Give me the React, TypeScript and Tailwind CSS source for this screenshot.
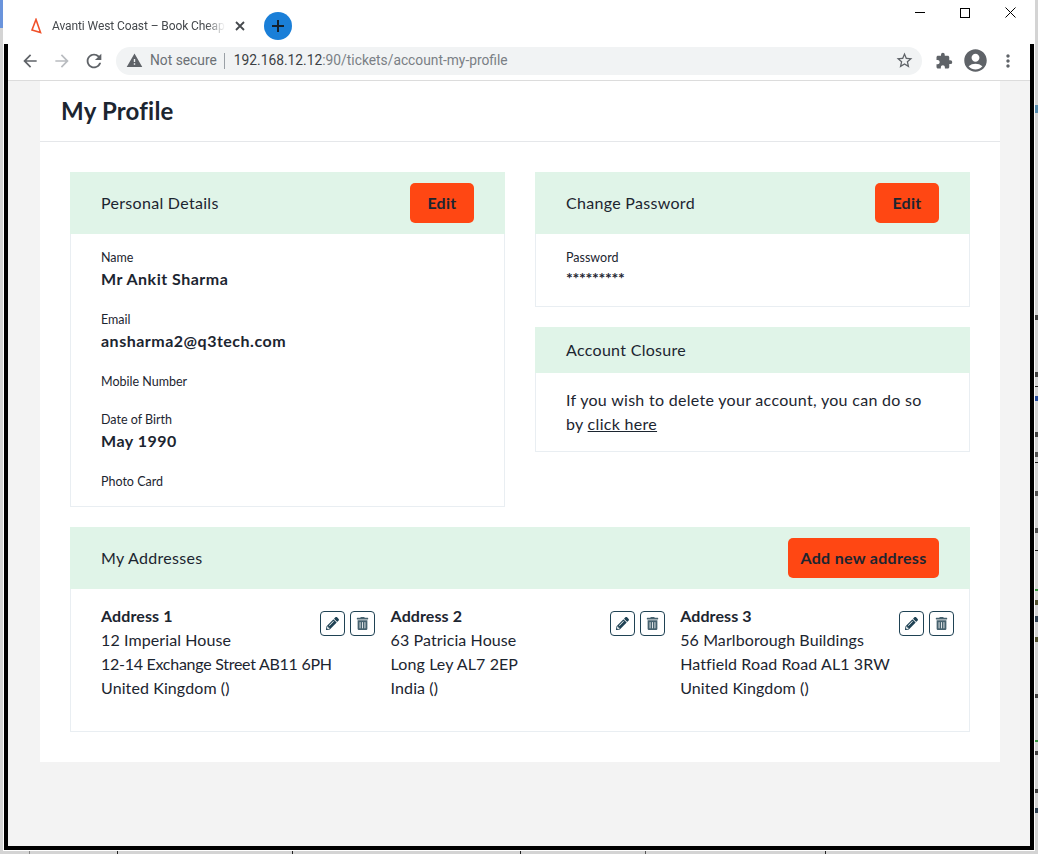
import type { ReactNode } from "react";
import { FaPencilAlt, FaTrashAlt } from "react-icons/fa";
import {
  MdAccountCircle,
  MdArrowBack,
  MdArrowForward,
  MdExtension,
  MdMoreVert,
  MdRefresh,
  MdStarBorder,
  MdWarning,
} from "react-icons/md";

const edgeMarks = [
  { gap: 105, h: 8, color: "bg-[#5b8fb0]" },
  { gap: 202, h: 5, color: "bg-[#444]" },
  { gap: 52, h: 5, color: "bg-[#444]" },
  { gap: 9, h: 1, color: "bg-[#222]" },
  { gap: 9, h: 5, color: "bg-[#2a4fa0]" },
  { gap: 31, h: 5, color: "bg-[#444]" },
  { gap: 15, h: 5, color: "bg-[#555]" },
  { gap: 5, h: 1, color: "bg-[#222]" },
  { gap: 28, h: 5, color: "bg-[#555]" },
  { gap: 32, h: 5, color: "bg-[#555]" },
  { gap: 17, h: 1, color: "bg-[#222]" },
  { gap: 38, h: 2, color: "bg-[#3c9a45]" },
  { gap: 9, h: 5, color: "bg-[#553]" },
  { gap: 11, h: 6, color: "bg-[#345]" },
  { gap: 15, h: 5, color: "bg-[#553]" },
  { gap: 52, h: 4, color: "bg-[#444]" },
  { gap: 42, h: 2, color: "bg-[#3c9a45]" },
  { gap: 9, h: 4, color: "bg-[#444]" },
  { gap: 34, h: 4, color: "bg-[#444]" },
  { gap: 15, h: 5, color: "bg-[#345]" },
];

function Card({ title, action, actionWidth, children }: { title: string; action?: string; actionWidth?: string; children: ReactNode }) {
  return (
    <div className="border border-[#e9eef2] bg-white">
      <div className={`-mx-px -mt-px flex items-center justify-between bg-[#e0f4e8] pr-[31px] pl-[31px] ${action ? "h-[62px]" : "h-[46px]"}`}>
        <h2 className="text-[16px] tracking-[0.3px] text-[#1c2530]">{title}</h2>
        {action && (
          <button className={`h-10 rounded-[5px] bg-[#ff4713] text-[16px] font-bold tracking-[0.3px] text-[#1c2530] ${actionWidth}`}>{action}</button>
        )}
      </div>
      {children}
    </div>
  );
}

function Field({ label, value }: { label: string; value?: string }) {
  return (
    <div>
      <div className="text-[12.5px] leading-[18px] text-[#1c2530]">{label}</div>
      {value && <div className="text-[16px] leading-[24px] font-bold tracking-[0.5px] text-[#1c2530]">{value}</div>}
    </div>
  );
}

function Address({ title, lines }: { title: string; lines: ReactNode[] }) {
  return (
    <div className="relative w-[274px]">
      <div className="text-[16px] leading-[24px] tracking-[0.1px] text-[#1c2530]">
        <div className="font-bold">{title}</div>
        {lines.map((line, i) => (
          <div key={i}>{line}</div>
        ))}
      </div>
      <div className="absolute top-[7px] right-0 flex gap-[5px]">
        <button className="flex h-[25px] w-[25px] items-center justify-center rounded-[4px] border border-[#1f4254] text-[#1f4254]">
          <FaPencilAlt size={13} />
        </button>
        <button className="flex h-[25px] w-[25px] items-center justify-center rounded-[4px] border border-[#1f4254] text-[#47626f]">
          <FaTrashAlt size={13} />
        </button>
      </div>
    </div>
  );
}

export default function App() {
  return (
    <div className="flex h-[854px] w-[1038px] overflow-hidden bg-[#d4d4d4] font-['Lato',sans-serif]">
      <div className="w-[3px] shrink-0">
        <div className="h-[28px] bg-[#6a94dc]" />
      </div>
      <div className="flex w-[1032px] flex-col">
        <div className="flex h-[44px] w-full items-start bg-white">
          <div className="mt-[12px] ml-[27px] flex h-[28px] items-center">
            <svg width="12" height="16" viewBox="0 0 12 16" fill="none" stroke="#f0512a" strokeWidth="1.6">
              <path d="M6 1.5 L2 12 L10.5 14.5 Z" strokeLinejoin="miter" />
            </svg>
            <span className="ml-[10px] w-[175px] text-[12px] tracking-[-0.1px] whitespace-nowrap text-[#45494d] font-['Roboto',sans-serif] [mask-image:linear-gradient(to_right,black_88%,transparent_99%)]">
              Avanti West Coast – Book Cheap
            </span>
            <svg className="ml-[8px]" width="10" height="10" viewBox="0 0 10 10" stroke="#45494d" strokeWidth="1.8">
              <path d="M1 1 L9 9 M9 1 L1 9" />
            </svg>
            <div className="ml-[19px] flex h-[28px] w-[28px] items-center justify-center rounded-full bg-[#1a7fd8]">
              <svg width="12" height="12" viewBox="0 0 12 12" stroke="#14202c" strokeWidth="2">
                <path d="M6 0 V12 M0 6 H12" />
              </svg>
            </div>
          </div>
          <div className="mt-[7px] mr-[19px] ml-auto flex items-center gap-[35px]">
            <div className="h-[1px] w-[10px] bg-black" />
            <div className="h-[10px] w-[10px] border border-black" />
            <svg width="11" height="11" viewBox="0 0 11 11" stroke="black" strokeWidth="1">
              <path d="M0.5 0.5 L10.5 10.5 M10.5 0.5 L0.5 10.5" />
            </svg>
          </div>
        </div>
        <div className="flex min-h-0 flex-1 flex-col border-x border-b border-white">
          <div className="flex min-h-0 flex-1 flex-col border-x-4 border-b-4 border-black bg-[#f3f3f3]">
            <div className="flex h-[37px] items-center border-b border-[#dcdcdc] bg-white pr-[8px] pb-[3px] pl-[12px]">
              <MdArrowBack size={20} className="text-[#5f6368]" />
              <MdArrowForward size={20} className="ml-[12px] text-[#b9bcc0]" />
              <MdRefresh size={22} className="ml-[11px] text-[#5f6368]" />
              <div className="ml-[11px] flex h-[28px] w-[806px] items-center rounded-full bg-[#f1f3f4] pr-[8px] pl-[10px] text-[13.8px] font-['Roboto',sans-serif]">
                <MdWarning size={17} className="text-[#5f6368]" />
                <span className="ml-[7px] text-[#6b7075]">Not secure</span>
                <div className="mr-[9px] ml-[7px] h-[16px] w-[1px] bg-[#9aa0a6]" />
                <span className="text-[#3c4043]">
                  192.168.12.12<span className="text-[#7a7f85]">:90/tickets/account-my-profile</span>
                </span>
                <MdStarBorder size={19} className="ml-auto text-[#5f6368]" />
              </div>
              <MdExtension size={18} className="ml-[13px] text-[#5f6368]" />
              <MdAccountCircle size={27} className="ml-[9px] text-[#5f6368]" />
              <MdMoreVert size={20} className="ml-[9px] text-[#5f6368]" />
            </div>
            <div className="mr-[30px] mb-[84px] ml-[32px] flex flex-1 flex-col bg-white">
              <div className="flex h-[61px] items-center border-b border-[#e5e7ea] pl-[21px]">
                <h1 className="text-[24px] font-bold tracking-[0.2px] text-[#1c2530]">My Profile</h1>
              </div>
              <div className="flex flex-col gap-[20px] px-[30px] pt-[30px]">
                <div className="grid grid-cols-2 gap-x-[30px]">
                  <Card title="Personal Details" action="Edit" actionWidth="w-[64px]">
                    <div className="flex h-[272px] flex-col gap-[20px] pt-[15px] pl-[30px]">
                      <Field label="Name" value="Mr Ankit Sharma" />
                      <Field label="Email" value="ansharma2@q3tech.com" />
                      <Field label="Mobile Number" />
                      <Field label="Date of Birth" value="May 1990" />
                      <Field label="Photo Card" />
                    </div>
                  </Card>
                  <div className="flex flex-col gap-[20px]">
                    <Card title="Change Password" action="Edit" actionWidth="w-[64px]">
                      <div className="h-[72px] pt-[15px] pl-[30px]">
                        <div className="text-[12.5px] leading-[18px] text-[#1c2530]">Password</div>
                        <div className="text-[16px] leading-[22px] font-bold tracking-[-0.3px] text-[#1c2530]">*********</div>
                      </div>
                    </Card>
                    <Card title="Account Closure">
                      <p className="h-[78px] px-[30px] pt-[15px] text-[16px] leading-[24px] tracking-[0.3px] text-[#1c2530]">
                        If you wish to delete your account, you can do so by <a className="underline">click here</a>
                      </p>
                    </Card>
                  </div>
                </div>
                <Card title="My Addresses" action="Add new address" actionWidth="w-[151px]">
                  <div className="flex h-[142px] gap-[15.6px] pt-[15px] pl-[30px]">
                    <Address
                      title="Address 1"
                      lines={["12 Imperial House", <span className="tracking-[-0.27px]">12-14 Exchange Street AB11 6PH</span>, "United Kingdom ()"]}
                    />
                    <Address title="Address 2" lines={["63 Patricia House", "Long Ley AL7 2EP", "India ()"]} />
                    <Address title="Address 3" lines={["56 Marlborough Buildings", "Hatfield Road Road AL1 3RW", "United Kingdom ()"]} />
                  </div>
                </Card>
              </div>
            </div>
          </div>
        </div>
        <div className="flex h-[3px] pl-[26px]">
          <div className="h-full w-[1px] bg-[#888]" />
          <div className="ml-[87px] h-full w-[1px] bg-[#222]" />
          <div className="ml-[174px] h-full w-[1px] bg-[#222]" />
          <div className="ml-[227px] h-full w-[1px] bg-[#222]" />
          <div className="ml-[124px] h-full w-[1px] bg-[#555]" />
          <div className="ml-[179px] h-full w-[1px] bg-[#222]" />
        </div>
      </div>
      <div className="flex w-[3px] flex-col">
        {edgeMarks.map((mark, i) => (
          <div key={i} style={{ marginTop: mark.gap, height: mark.h }} className={`w-full shrink-0 ${mark.color}`} />
        ))}
      </div>
    </div>
  );
}
